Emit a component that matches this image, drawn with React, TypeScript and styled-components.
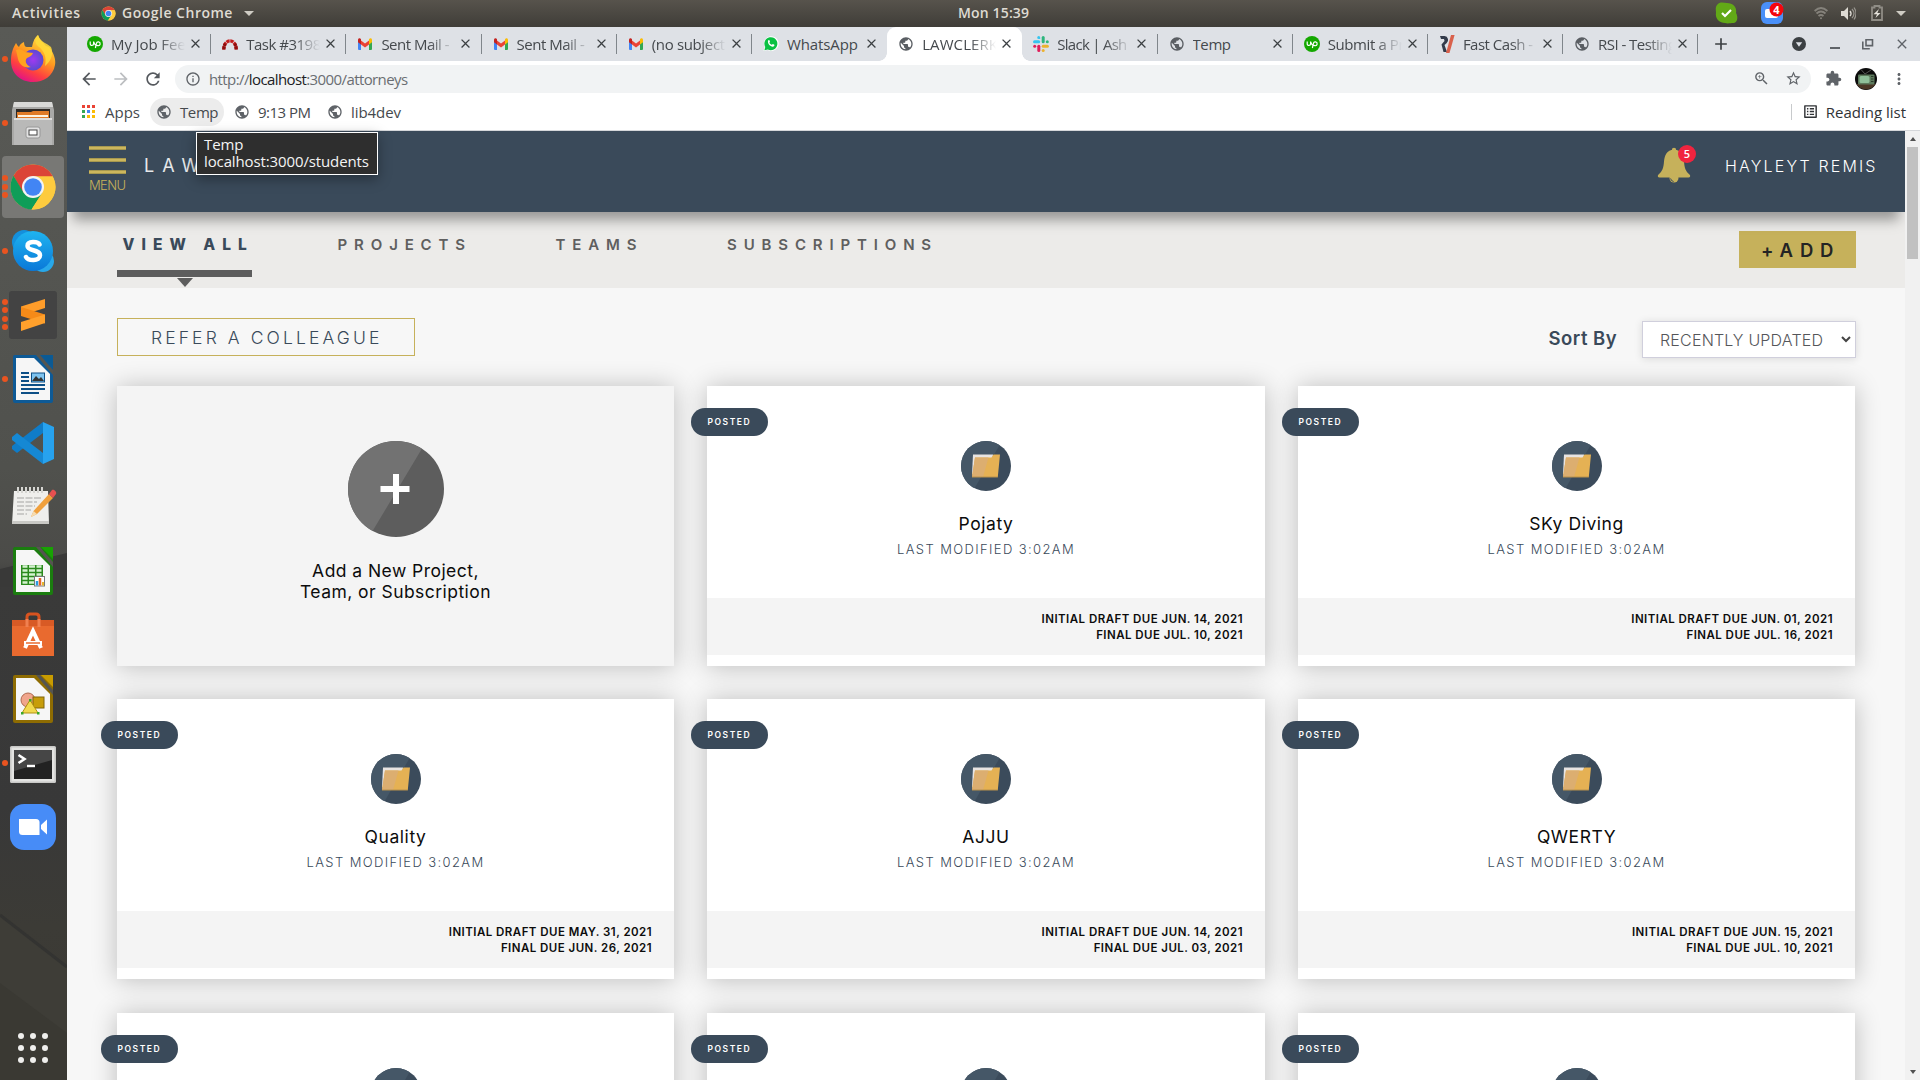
import React from 'react';
import styled, { createGlobalStyle, css } from 'styled-components';
import {
  MdAdd,
  MdArrowBack,
  MdArrowForward,
  MdClose,
  MdExtension,
  MdInfoOutline,
  MdListAlt,
  MdMoreVert,
  MdPublic,
  MdRefresh,
  MdStarBorder,
  MdZoomIn,
} from 'react-icons/md';

const ui = `"Open Sans", "Noto Sans", sans-serif`;
const brand = `Inter, "Open Sans", sans-serif`;
const navy = '#3a4a5a';
const gold = '#c6b15b';

const GlobalStyle = createGlobalStyle`
  *, *::before, *::after { box-sizing: border-box; }
  body { margin: 0; overflow: hidden; background: #f7f7f7; font-family: ${ui}; }
  svg { display: block; flex: none; }
  button { font: inherit; margin: 0; padding: 0; border: 0; background: none; color: inherit; }
`;

/* ---------- desktop shell ---------- */

const Desktop = styled.div`
  display: grid;
  grid-template-columns: 67px 1853px;
  grid-template-rows: 27px 1053px;
  width: 1920px;
  height: 1080px;
  overflow: hidden;
`;

const SystemBar = styled.header`
  grid-column: 1 / -1;
  display: grid;
  grid-template-columns: 958px auto 1fr;
  align-items: center;
  height: 27px;
  padding: 0 14px 1px 0;
  background: linear-gradient(#57534c, #3f3d38);
  color: #dfdbd2;
  font-size: 14px;
  font-weight: 600;
  line-height: 20px;
`;

const SystemLeft = styled.div`
  display: flex;
  align-items: center;
  padding-left: 12px;
`;

const Activities = styled.span`
  width: 89px;
  letter-spacing: 0.74px;
`;

const AppName = styled.span`
  margin: 0 11px 0 6px;
  letter-spacing: 0.5px;
`;

const Clock = styled.span`
  letter-spacing: 0.15px;
  white-space: nowrap;
`;

const SystemRight = styled.div`
  display: flex;
  align-items: center;
  justify-content: flex-end;
`;

const Caret = styled.span`
  width: 0;
  height: 0;
  border: 5px solid transparent;
  border-bottom: 0;
  border-top-color: #cfccc4;
`;

const TrayItem = styled.span<{ $gap: number }>`
  display: flex;
  margin-right: ${(p) => p.$gap}px;
`;

/* ---------- dock ---------- */

const Dock = styled.nav`
  position: relative;
  display: flex;
  flex-direction: column;
  padding-top: 0;
  background: linear-gradient(#595a56, #50514d 440px, #4b4b48 535px, #3a3a39 560px, #383838 780px, #3c3b36 900px, #3a3833);
`;

const DockShade = styled.svg`
  position: absolute;
  inset: 0;
`;

const DockSlot = styled.div<{ $active?: boolean }>`
  position: relative;
  display: flex;
  align-items: center;
  height: 64px;
  padding: 0 0 1px 2px;
  &::before {
    content: '';
    position: absolute;
    left: 2px;
    top: 1px;
    width: 62px;
    height: 62px;
    border-radius: 4px;
    background: ${(p) => (p.$active ? '#787875' : 'transparent')};
  }
`;

const Pips = styled.div`
  position: relative;
  display: flex;
  flex-direction: column;
  gap: 2.5px;
  width: 7px;
`;

const Pip = styled.i`
  width: 6px;
  height: 6px;
  border-radius: 50%;
  background: #e95420;
`;

const DockIcon = styled.svg`
  position: relative;
`;

const AppGrid = styled.div`
  position: relative;
  display: grid;
  grid-template-columns: repeat(3, 6px);
  gap: 6px;
  margin: auto 0 17px 18px;
`;

const GridDot = styled.i`
  width: 6px;
  height: 6px;
  border-radius: 50%;
  background: #efefed;
`;

/* ---------- browser chrome ---------- */

const Browser = styled.main`
  display: flex;
  flex-direction: column;
  min-width: 0;
  background: #fff;
  position: relative;
`;

const TabStrip = styled.div`
  display: flex;
  align-items: stretch;
  height: 34px;
  flex: none;
  padding-left: 9px;
  background: #dee1e6;
`;

const Tab = styled.div<{ $active?: boolean; $divider?: boolean }>`
  position: relative;
  display: flex;
  align-items: center;
  flex: none;
  width: 135.2px;
  padding: 0 0 1px 11px;
  border-radius: 9px 9px 0 0;
  ${(p) =>
    p.$active &&
    css`
      background: #fff;
      &::before,
      &::after {
        content: '';
        position: absolute;
        bottom: 0;
        width: 8px;
        height: 8px;
      }
      &::before {
        left: -8px;
        background: radial-gradient(circle at 0 0, transparent 7.5px, #fff 8px);
      }
      &::after {
        right: -8px;
        background: radial-gradient(circle at 100% 0, transparent 7.5px, #fff 8px);
      }
    `}
  ${(p) =>
    p.$divider &&
    css`
      &::after {
        content: '';
        position: absolute;
        right: 0;
        top: 7px;
        width: 1px;
        height: 20px;
        background: #80868b;
      }
    `}
`;

const TabTitle = styled.span<{ $spacing: number; $fade: boolean }>`
  width: 75px;
  margin-left: 8px;
  overflow: hidden;
  white-space: nowrap;
  color: #45494d;
  font-size: 15px;
  line-height: 22px;
  letter-spacing: ${(p) => p.$spacing}px;
  mask-image: ${(p) => (p.$fade ? 'linear-gradient(90deg, #000 48px, transparent 74px)' : 'none')};
`;

const TabClose = styled(MdClose)`
  margin-left: 2px;
  color: #3c4043;
`;

const StripButtons = styled.div`
  display: flex;
  align-items: center;
  flex: 1;
  padding: 0 10px 0 13px;
  color: #3c4043;
`;

const WindowButtons = styled.div`
  display: flex;
  align-items: center;
  gap: 20px;
  margin-left: auto;
`;

const Toolbar = styled.div`
  display: flex;
  align-items: center;
  height: 35px;
  flex: none;
  padding: 0 12px 0 12px;
  color: #5f6368;
`;

const NavButton = styled.button<{ $faded?: boolean }>`
  display: flex;
  width: 32px;
  color: ${(p) => (p.$faded ? '#bcbec1' : '#55595e')};
`;

const Omnibox = styled.div`
  display: flex;
  align-items: center;
  width: 1636px;
  height: 28px;
  padding: 0 9px 0 10px;
  border-radius: 14px;
  background: #f1f3f4;
`;

const Url = styled.span`
  margin: 0 auto 0 8px;
  font-size: 15px;
  line-height: 20px;
  letter-spacing: -0.6px;
  color: #6a6e72;
  b {
    font-weight: 400;
    color: #202124;
  }
`;

const OmniboxActions = styled.div`
  display: flex;
  gap: 15px;
`;

const ToolbarEnd = styled.div`
  display: flex;
  align-items: center;
  justify-content: space-between;
  flex: 1;
  padding-left: 14px;
`;

const Bookmarks = styled.div`
  display: flex;
  align-items: center;
  height: 35px;
  flex: none;
  padding: 0 14px 3px 15px;
  border-bottom: 1px solid #d5d7da;
  font-size: 15px;
  line-height: 20px;
  color: #45494d;
`;

const AppsMark = styled.div`
  display: grid;
  grid-template-columns: repeat(3, 3px);
  gap: 2px;
`;

const AppsCell = styled.i<{ $color: string }>`
  height: 3px;
  background: ${(p) => p.$color};
`;

const AppsLabel = styled.span`
  margin: 0 10px;
`;

const Bookmark = styled.div<{ $hover?: boolean; $width: number; $spacing: number }>`
  display: flex;
  align-items: center;
  gap: 8px;
  width: ${(p) => p.$width}px;
  height: 28px;
  margin-right: 4px;
  padding-left: 6px;
  border-radius: 14px;
  letter-spacing: ${(p) => p.$spacing}px;
  white-space: nowrap;
  background: ${(p) => (p.$hover ? '#ececec' : 'transparent')};
  svg {
    color: #5f6368;
  }
`;

const ReadingList = styled.div`
  display: flex;
  align-items: center;
  gap: 7px;
  height: 16px;
  margin-left: auto;
  padding-left: 10px;
  border-left: 1px solid #c8cacc;
  color: #303336;
`;

const Tooltip = styled.div`
  position: absolute;
  z-index: 5;
  left: 129px;
  top: 105px;
  width: 182px;
  height: 43px;
  padding: 3px 7px;
  border: 1px solid #fff;
  background: #2e2e2e;
  box-shadow: 0 4px 12px rgba(0, 0, 0, 0.35);
  color: #f4f4f4;
  font-size: 15px;
  line-height: 16.6px;
  letter-spacing: -0.12px;
  white-space: pre;
`;

/* ---------- page ---------- */

const Viewport = styled.div`
  display: grid;
  grid-template-columns: 1838px 15px;
  height: 949px;
  overflow: hidden;
`;

const Page = styled.div`
  display: flex;
  flex-direction: column;
  height: 949px;
  overflow: hidden;
  background: #f7f7f7;
  font-family: ${brand};
`;

const SiteHeader = styled.div`
  position: relative;
  z-index: 1;
  display: flex;
  align-items: flex-start;
  height: 81px;
  flex: none;
  padding: 15px 29px 0 22px;
  background: ${navy};
  box-shadow: 0 14px 12px -6px rgba(0, 0, 0, 0.36);
`;

const MenuButton = styled.button`
  display: flex;
  flex-direction: column;
  gap: 8px;
  width: 37px;
  color: ${gold};
  font-size: 13px;
  font-weight: 300;
  line-height: 16px;
  letter-spacing: -0.63px;
  text-align: left;
`;

const MenuBar = styled.i`
  height: 4px;
  background: linear-gradient(#a8994f 1px, #cdb75d 1px 3px, #a8994f 3px);
`;

const MenuLabel = styled.span`
  margin-top: -5px;
`;

const Wordmark = styled.span`
  margin: 8px 0 0 18px;
  color: #e6e8ea;
  font-size: 18px;
  font-weight: 400;
  line-height: 24px;
  letter-spacing: 8px;
`;

const Bell = styled.div`
  position: relative;
  margin: 1px 0 0 auto;
  width: 34px;
`;

const BellCount = styled.span`
  position: absolute;
  left: 21px;
  top: -2px;
  width: 18px;
  height: 18px;
  border-radius: 50%;
  background: #f0243f;
  color: #fff;
  font: 600 11px/18px ${ui};
  text-align: center;
`;

const UserName = styled.span`
  margin: 10px 0 0 34px;
  width: 151px;
  color: #fff;
  font-size: 16px;
  font-weight: 300;
  line-height: 20px;
  letter-spacing: 2.15px;
  white-space: nowrap;
`;

const SectionNav = styled.div`
  display: flex;
  align-items: flex-start;
  gap: 80px;
  height: 76px;
  flex: none;
  padding: 20px 49px 0 50px;
  background: #ecebe9;
`;

const SectionLink = styled.a<{ $current?: boolean; $width: number }>`
  display: flex;
  flex-direction: column;
  align-items: center;
  width: ${(p) => p.$width}px;
  color: ${(p) => (p.$current ? navy : '#5f5f5f')};
  font-size: ${(p) => (p.$current ? 15.5 : 15)}px;
  font-weight: ${(p) => (p.$current ? 800 : 600)};
  line-height: 25px;
  letter-spacing: ${(p) => (p.$current ? 7 : 6.85)}px;
`;

const LinkText = styled.span`
  align-self: flex-start;
  padding-left: 5.6px;
  white-space: nowrap;
`;

const Underline = styled.i`
  width: 100%;
  height: 7px;
  margin-top: 13px;
  background: #5d5d5d;
`;

const UnderlineTip = styled.i`
  margin-top: 1px;
  border: 8px solid transparent;
  border-top: 9px solid #5d5d5d;
  border-bottom: 0;
`;

const AddButton = styled.button`
  width: 117px;
  height: 37px;
  margin: -1px 0 0 auto;
  padding-left: 22px;
  background: ${gold};
  color: #242424;
  font-size: 18.5px;
  font-weight: 600;
  letter-spacing: 6.8px;
  text-align: left;
`;

const Controls = styled.div`
  display: flex;
  align-items: flex-start;
  height: 98px;
  flex: none;
  padding: 30px 49px 0 50px;
`;

const ReferButton = styled.button`
  width: 298px;
  height: 38px;
  padding-left: 33px;
  border: 1px solid ${gold};
  color: ${navy};
  font-size: 17.5px;
  font-weight: 300;
  letter-spacing: 3.1px;
  text-align: left;
`;

const SortLabel = styled.label`
  margin: 8px 25px 0 auto;
  color: ${navy};
  font-size: 18.5px;
  font-weight: 600;
  line-height: 24px;
  letter-spacing: 0.45px;
`;

const SortSelect = styled.div`
  display: flex;
  align-items: center;
  justify-content: space-between;
  width: 214px;
  height: 37px;
  margin-top: 3px;
  padding: 0 4px 0 17px;
  border: 1px solid #d0cfdc;
  background: #fff;
  box-shadow: 0 1px 8px rgba(0, 0, 0, 0.12);
  color: #55565a;
  font-size: 16px;
  font-weight: 300;
  letter-spacing: 0.2px;
`;

const CardGrid = styled.div`
  display: grid;
  grid-template-columns: 557px 558px 557px;
  grid-auto-rows: 280px;
  gap: 33.4px 33px;
  padding-left: 50px;
`;

const Card = styled.article<{ $muted?: boolean }>`
  position: relative;
  display: flex;
  flex-direction: column;
  align-items: center;
  padding-top: 55px;
  background: ${(p) => (p.$muted ? '#f4f4f4' : '#fff')};
  box-shadow: 0 1px 24px rgba(0, 0, 0, 0.24);
  color: #0c0c0c;
`;

const AddText = styled.p`
  margin: 23px 0 0;
  font-size: 17.5px;
  line-height: 21px;
  letter-spacing: 0.45px;
  text-align: center;
`;

const Badge = styled.span`
  position: absolute;
  left: -16.5px;
  top: 22px;
  width: 77px;
  height: 28px;
  padding-left: 17px;
  border-radius: 14px;
  background: ${navy};
  color: #fff;
  font-size: 8.5px;
  font-weight: 600;
  line-height: 29px;
  letter-spacing: 1.55px;
`;

const CardTitle = styled.h3`
  margin: 22px 0 0;
  font-size: 17.5px;
  font-weight: 400;
  line-height: 21px;
  letter-spacing: 0.55px;
`;

const Modified = styled.p`
  margin: 7px 0 0;
  color: ${navy};
  font-size: 13px;
  font-weight: 300;
  line-height: 17px;
  letter-spacing: 1.38px;
`;

const DueBand = styled.div`
  align-self: stretch;
  height: 57px;
  margin: auto 0 11px;
  padding: 13px 22px 0 0;
  background: #f4f4f4;
  font-size: 11.5px;
  font-weight: 600;
  line-height: 16px;
  letter-spacing: 0.46px;
  text-align: right;
`;

const Scrollbar = styled.div`
  display: flex;
  flex-direction: column;
  align-items: center;
  justify-content: space-between;
  padding: 6px 0;
  background: #f1f1f1;
`;

const ScrollArrow = styled.i<{ $down?: boolean }>`
  border: 3.5px solid transparent;
  ${(p) =>
    p.$down
      ? 'border-top: 4px solid #505050; border-bottom: 0;'
      : 'border-bottom: 4px solid #505050; border-top: 0;'}
`;

const ScrollThumb = styled.i`
  width: 11px;
  height: 112px;
  margin: 6px 0 auto;
  background: #c1c1c1;
`;

/* ---------- drawings ---------- */

const ChromeLogo = ({ size }: { size: number }) => (
  <svg width={size} height={size} viewBox="0 0 48 48">
    <circle cx="24" cy="24" r="22.5" fill="#fdcb3f" />
    <path d="M4.5 12.75A22.5 22.5 0 0 1 43.5 12.75V13.5H24L14 30Z" fill="#db4437" />
    <path d="M4.5 12.75A22.5 22.5 0 0 0 22.5 46.5L33.5 29.5L24 34L14.5 29.5Z" fill="#0f9d58" />
    <path d="M43.7 13.5A22.5 22.5 0 0 1 22.5 46.5L33.5 29.5L34 18L24 13.5Z" fill="#fdcb3f" />
    <circle cx="24" cy="24" r="11" fill="#f3f3f3" />
    <circle cx="24" cy="24" r="8.8" fill="#4285f4" />
  </svg>
);

const UpworkMark = () => (
  <svg width="16" height="16" viewBox="0 0 16 16">
    <circle cx="8" cy="8" r="8" fill="#14a800" />
    <path
      d="M3.2 5.6v2.2a1.7 1.7 0 0 0 3.4 0V5.6c.6 2 1.3 3.4 2.7 3.9M8.4 12l1-4.6A1.9 1.9 0 1 1 11 9.7c-1 0-1.8-.6-2.4-1.3"
      fill="none"
      stroke="#fff"
      strokeWidth="1.2"
    />
  </svg>
);

const RedmineMark = () => (
  <svg width="16" height="16" viewBox="0 0 16 16" fill="none" strokeWidth="3.2">
    <path d="M1.8 13.5C1.8 2 14.2 2 14.2 13.5" stroke="#c41c1c" strokeDasharray="3.4 .6" />
    <path d="M1.8 13.5c0-2.5.6-4.4 1.6-5.8M14.2 13.5c0-2.5-.6-4.4-1.6-5.8" stroke="#8e0f0f" strokeDasharray="3 .6" />
  </svg>
);

const GmailMark = () => (
  <svg width="16" height="16" viewBox="0 0 16 16">
    <path d="M1 4.5h3V14H2a1 1 0 0 1-1-1Z" fill="#4285f4" />
    <path d="M12 4.5h3V13a1 1 0 0 1-1 1h-2Z" fill="#34a853" />
    <path d="M4 4.4 8 7.4l4-3v4.2l-4 3-4-3Z" fill="#ea4335" />
    <path d="M1 4.2C1 2.2 3 1.8 4 3.2v5.4L1 6.2Z" fill="#c5221f" />
    <path d="M15 4.2c0-2-2-2.4-3-1v5.4l3-2.4Z" fill="#fbbc04" />
  </svg>
);

const WhatsAppMark = () => (
  <svg width="16" height="17" viewBox="0 0 17 17">
    <path d="M.6 16.6 1.8 12A7.800 7.800 0 1 1 5 15.4Z" fill="#fff" />
    <path d="m1.5 15.7.9-3.5a6.900 6.900 0 1 1 2.7 2.6Z" fill="#0ac143" />
    <path
      d="M5.4 5.4c.6-.9 1.3-.7 1.5-.2l.5 1.2c.1.5-.6.9-.6 1.2.6 1.2 1.5 1.9 2.6 2.3.4 0 .8-1 1.2-.8l1.4.7c.5.4-.1 1.8-1.3 2.1-2.7.4-6.3-3.3-5.3-6.5Z"
      fill="#fff"
    />
  </svg>
);

const SlackMark = () => (
  <svg width="16" height="16" viewBox="0 0 16 16">
    <g fill="#36c5f0">
      <rect x="0" y="4.3" width="7.2" height="3" rx="1.5" />
      <path d="M5.7 0a1.5 1.5 0 0 1 1.5 1.5V3H5.7a1.5 1.5 0 0 1 0-3Z" />
    </g>
    <g fill="#2eb67d">
      <rect x="8.7" y="0" width="3" height="7.2" rx="1.5" />
      <circle cx="14.3" cy="5.8" r="1.5" />
    </g>
    <g fill="#ecb22e">
      <rect x="8.7" y="8.7" width="7.2" height="3" rx="1.5" />
      <circle cx="10.2" cy="14.4" r="1.5" />
    </g>
    <g fill="#e01e5a">
      <rect x="4.3" y="8.7" width="3" height="7.2" rx="1.5" />
      <circle cx="1.7" cy="10.2" r="1.5" />
    </g>
  </svg>
);

const FastCashMark = () => (
  <svg width="16" height="18" viewBox="0 0 16 18">
    <path d="M1 1h4.500a4 4 0 0 1 2 7.200L5.500 10 8 17H4.500L2.500 9.500 5.500 6 5 4H2Z" fill="#333b4a" />
    <path d="M12 0h3.600L10.500 18H7Z" fill="#d9614c" />
  </svg>
);

const Globe = () => <MdPublic size={16} color="#5a5e63" />;

const BellDrawing = () => (
  <svg width="34" height="36" viewBox="0 0 34 36">
    <circle cx="17" cy="3" r="2.2" fill={gold} />
    <path
      d="M17 2.500C9.500 3 7.500 8.500 7 14.500 6.500 21 5.500 24 1.500 27.500.2 29 .8 30.500 2.500 30.500h29c1.700 0 2.300-1.500 1-3-4-3.500-5-6.500-5.500-13C26.500 8.500 24.500 3 17 2.500Z"
      fill={gold}
    />
    <circle cx="17" cy="31" r="4.5" fill={gold} />
    <path d="M13.600 31.500a3.600 3.600 0 0 0 3 3" stroke={navy} strokeWidth="1" fill="none" />
  </svg>
);

const PlusDrawing = () => (
  <svg width="96" height="96" viewBox="0 0 96 96">
    <defs>
      <clipPath id="plus-half">
        <path d="M0 0H78.500L21 96H0Z" />
      </clipPath>
    </defs>
    <circle cx="48" cy="48" r="48" fill="#5d5d5d" />
    <circle cx="48" cy="48" r="48" fill="#727272" clipPath="url(#plus-half)" />
    <path d="M45 33h6v12h10.500v6H51v12h-6V51H32.500v-6H45Z" fill="#fff" />
  </svg>
);

const FolderDrawing = () => (
  <svg width="50" height="50" viewBox="0 0 50 50">
    <defs>
      <clipPath id="folder-half">
        <path d="M0 0H41L12 50H0Z" />
      </clipPath>
    </defs>
    <circle cx="25" cy="25" r="25" fill="#3b4b5b" />
    <circle cx="25" cy="25" r="25" fill="#455767" clipPath="url(#folder-half)" />
    <path d="M12 13.500h20l-1.500 20H11Z" fill="#e8e4e2" />
    <path d="M14 16.500H30.500l2-3h6.500L36.800 36H11Z" fill="#e5b154" />
    <path d="M14 16.500H27.500L22 36H11Z" fill="#dcae70" />
    <path d="M11 35.400h25.900l-.1 1.200H11Z" fill="#b9924d" />
  </svg>
);

const documentBody = (outer: string, fold: string) => (
  <>
    <rect x="4" y="0" width="40" height="48" rx="2" fill={outer} />
    <path d="M7 3h18l16 16v26H7Z" fill="#f6f6f6" />
    <path d="M27 0h4l13 15v5Z" fill="#555550" />
    <path d="M32 0h12v12Z" fill={fold} />
  </>
);

const dockApps: { name: string; pips: number; active?: boolean; art: React.ReactNode }[] = [
  {
    name: 'firefox',
    pips: 1,
    art: (
      <>
        <defs>
          <linearGradient id="ff" x1=".8" y1="0" x2=".3" y2="1">
            <stop offset="0" stopColor="#fff04a" />
            <stop offset=".45" stopColor="#ff9a1f" />
            <stop offset=".75" stopColor="#ff4040" />
            <stop offset="1" stopColor="#e0108a" />
          </linearGradient>
          <radialGradient id="ffc">
            <stop offset="0" stopColor="#a03af0" />
            <stop offset="1" stopColor="#5a4ad0" />
          </radialGradient>
        </defs>
        <path
          d="M7 8c1 2 2 3 3 4 1-3 3-4 5-5 0 3 1 5 3 5h5C24 6 26 2 29 0c2 6 5 7 8 11l3 1c5 6 7 13 6 18C44 41 35 47 24 47 11 47 2 38 2 26 2 18 4 13 7 8Z"
          fill="url(#ff)"
        />
        <circle cx="24" cy="25" r="10.5" fill="url(#ffc)" />
        <path d="M7 15c4-2 7 0 9 2l8 1c-1 3-4 4-6 5-3 3 0 8 4 9-7 2-12-3-13-8Z" fill="#ffa21f" />
        <path d="M29 0c-4 5-3 9 1 12 5 4 8 10 6 19 6-5 9-12 6-19-4-4-10-4-13-12Z" fill="#ffd93a" opacity=".85" />
      </>
    ),
  },
  {
    name: 'files',
    pips: 1,
    art: (
      <>
        <path d="M5 3h38l2 8v35H3V11Z" fill="#a9a9a7" />
        <path d="M5 3h38l1 5H4Z" fill="#d9d9d7" />
        <path d="M7 10h34v9H7Z" fill="#2e2925" />
        <path d="M8 13h14l2-1h16v8H8Z" fill="#e07b27" />
        <path d="M9 16h30v2H9Z" fill="#fff3e0" />
        <path d="M5 19h38v27H5Z" fill="#b9b9b8" />
        <path d="M5 19h38v2H5Z" fill="#dededd" />
        <rect x="17" y="28" width="14" height="11" rx="2" fill="#e2e2e2" stroke="#989898" />
        <rect x="20" y="31" width="8" height="5" fill="#fff" stroke="#444" />
      </>
    ),
  },
  { name: 'chrome', pips: 3, active: true, art: <ChromeLogo size={48} /> },
  {
    name: 'skype',
    pips: 1,
    art: (
      <>
        <defs>
          <linearGradient id="sk" x1="0" y1="0" x2="0" y2="1">
            <stop offset="0" stopColor="#1fb4f0" />
            <stop offset="1" stopColor="#0a78d8" />
          </linearGradient>
        </defs>
        <circle cx="15" cy="15" r="12" fill="#1490dc" />
        <circle cx="34" cy="34" r="11" fill="#28a8ea" />
        <circle cx="24" cy="24" r="20" fill="url(#sk)" />
        <path
          d="M30.500 17.500c-1.500-3-12-4-12 1.500 0 5.500 12.500 3 12.500 9.500 0 6-12 5.500-14 1.500"
          fill="none"
          stroke="#fff"
          strokeWidth="4.5"
          strokeLinecap="round"
        />
      </>
    ),
  },
  {
    name: 'sublime',
    pips: 4,
    art: (
      <>
        <rect x="0" y="0" width="48" height="48" rx="3" fill="#434343" />
        <path d="M12 15.500 36 8v9L12 24.500Z" fill="#ff9d2a" />
        <path d="M12 16v9l24 7.500v-9Z" fill="#f58a18" />
        <path d="M12 31 36 23.500v8.500L12 40Z" fill="#ffa02c" />
      </>
    ),
  },
  {
    name: 'writer',
    pips: 1,
    art: (
      <>
        {documentBody('#0e5a96', '#0b5a94')}
        <path d="M12 18h8M12 22h8M12 26h8M12 30h24M12 34h24M12 38h18" stroke="#0d4f86" strokeWidth="2" />
        <rect x="22.5" y="18" width="13" height="9" fill="#7ec3ef" stroke="#0d4f86" />
        <path d="m23 26 4-5 3 3 2-2 3 4Z" fill="#333" />
      </>
    ),
  },
  {
    name: 'vscode',
    pips: 0,
    art: (
      <>
        <path d="M34 3v11L8 34l-5-4v-3Z" fill="#0f7cc8" />
        <path d="M34 45V34L8 14l-5 4v3Z" fill="#1588d4" />
        <path d="M34 3l11 5v32l-11 5Z" fill="#27a2ee" />
      </>
    ),
  },
  {
    name: 'notes',
    pips: 0,
    art: (
      <>
        <path d="M5 8h34l1 33H3Z" fill="#efefec" />
        <path d="M3 38h37v3H3Z" fill="#c9c9c5" />
        <path d="M9 4v6M13 4v6M17 4v6M21 4v6M25 4v6M29 4v6M33 4v6" stroke="#d6d6d2" strokeWidth="2" />
        <path d="M8 15h25M8 19h20M8 23h18M8 27h14M8 31h10" stroke="#a5a5a3" strokeDasharray="7 1.5" />
        <path d="m22 34 2.500-6L40 11l4 4-16 16Z" fill="#f0a03c" />
        <path d="m22 34 2.500-6 3.500 3Z" fill="#f6dcb0" />
        <path d="m40 11 3-4c2-1 5 2 4 4l-3 4Z" fill="#e85050" />
      </>
    ),
  },
  {
    name: 'calc',
    pips: 0,
    art: (
      <>
        {documentBody('#1b7d0f', '#18a303')}
        <rect x="12" y="18" width="22" height="20" fill="#2b8a1d" />
        <path
          d="M13.500 19.500h5M20 19.500h6M27.500 19.500h5M13.500 23.500h5M20 23.500h6M27.500 23.500h5M13.500 27.500h5M20 27.500h6M27.500 27.500h5M13.500 31.500h5M20 31.500h6M13.500 35.500h5M20 35.500h6"
          stroke="#d5f2cf"
          strokeWidth="2.5"
        />
        <rect x="25.5" y="29.5" width="10" height="9.5" fill="#fff" stroke="#777" />
        <path d="M28 34v4.500" stroke="#2c9be0" strokeWidth="2.5" />
        <path d="M31 31v7.500" stroke="#e2632a" strokeWidth="2.5" />
        <path d="M34 35v3.500" stroke="#e8b52c" strokeWidth="2" />
      </>
    ),
  },
  {
    name: 'software',
    pips: 0,
    art: (
      <>
        <path d="M18 14V6q0-3 3-3h6q3 0 3 3v8" fill="none" stroke="#d8531f" strokeWidth="3" />
        <path d="M3 9h42v36H3Z" fill="#e96a2f" />
        <path d="M3 9h42v6H3Z" fill="#d85a25" />
        <path d="M18 8v8M30 8v8" stroke="#f08050" strokeWidth="3" />
        <path d="m16 37 8-17 8 17" fill="none" stroke="#fff" strokeWidth="4" />
        <path d="M15 32h18" stroke="#fff" strokeWidth="4" />
        <path d="M17 32h14" stroke="#e96a2f" strokeWidth="1.5" />
      </>
    ),
  },
  {
    name: 'draw',
    pips: 0,
    art: (
      <>
        {documentBody('#8e6c02', '#c99c00')}
        <circle cx="19" cy="25" r="7" fill="#f0a58c" stroke="#b06a50" />
        <rect x="24" y="22" width="11" height="11" fill="#c79d0a" stroke="#80640a" />
        <path d="M13 38 21 25l8 13Z" fill="#f2d94e" stroke="#b09010" />
        <path d="M12 37h2.500v2.500H12ZM20 24h2.500v2.500H20ZM28 37h2.500v2.500H28Z" fill="#3aa827" />
      </>
    ),
  },
  {
    name: 'terminal',
    pips: 1,
    art: (
      <>
        <rect x="1" y="7" width="46" height="37" rx="1.5" fill="#c9c9c7" />
        <rect x="2.5" y="8.5" width="43" height="34" fill="#e4e4e2" />
        <rect x="5" y="11" width="38" height="29" fill="#222" />
        <path d="M5 11h38v10L5 32Z" fill="#464646" />
        <path d="m9.500 16 6 4-6 4" fill="none" stroke="#fff" strokeWidth="2.6" />
        <path d="M18 27h8" stroke="#fff" strokeWidth="2.4" />
      </>
    ),
  },
  {
    name: 'zoom',
    pips: 0,
    art: (
      <>
        <rect x="1" y="1" width="46" height="46" rx="14" fill="#478cf7" />
        <path d="M10 16h17q3.500 0 3.500 3.500V32h-17Q10 32 10 28.500Z" fill="#fff" />
        <path d="m32 22 6-5.500V31.500L32 26Z" fill="#fff" />
      </>
    ),
  },
];

/* ---------- data ---------- */

const tabs = [
  { title: 'My Job Feed', icon: <UpworkMark />, spacing: -0.1 },
  { title: 'Task #3198', icon: <RedmineMark />, spacing: -0.5 },
  { title: 'Sent Mail -', icon: <GmailMark />, spacing: -0.5 },
  { title: 'Sent Mail -', icon: <GmailMark />, spacing: -0.5 },
  { title: '(no subject', icon: <GmailMark />, spacing: -0.35 },
  { title: 'WhatsApp', icon: <WhatsAppMark />, spacing: -0.1, short: true },
  { title: 'LAWCLERK', icon: <Globe />, spacing: 0.1 },
  { title: 'Slack | Ash', icon: <SlackMark />, spacing: -0.73 },
  { title: 'Temp', icon: <Globe />, spacing: -0.4, short: true },
  { title: 'Submit a Pr', icon: <UpworkMark />, spacing: -0.4 },
  { title: 'Fast Cash -', icon: <FastCashMark />, spacing: -0.5 },
  { title: 'RSI - Testing', icon: <Globe />, spacing: -0.55 },
];
const activeTab = 6;

const projects = [
  { title: 'Pojaty', draft: 'JUN. 14, 2021', final: 'JUL. 10, 2021' },
  { title: 'SKy Diving', draft: 'JUN. 01, 2021', final: 'JUL. 16, 2021' },
  { title: 'Quality', draft: 'MAY. 31, 2021', final: 'JUN. 26, 2021' },
  { title: 'AJJU', draft: 'JUN. 14, 2021', final: 'JUL. 03, 2021' },
  { title: 'QWERTY', draft: 'JUN. 15, 2021', final: 'JUL. 10, 2021' },
  { title: '', draft: '', final: '' },
  { title: '', draft: '', final: '' },
  { title: '', draft: '', final: '' },
];

const appColors = ['#ea4335', '#ea4335', '#ea4335', '#34a853', '#4285f4', '#fbbc04', '#34a853', '#fbbc04', '#fbbc04'];

/* ---------- composition ---------- */

const TopBar = () => (
  <SystemBar>
    <SystemLeft>
      <Activities>Activities</Activities>
      <ChromeLogo size={15} />
      <AppName>Google Chrome</AppName>
      <Caret />
    </SystemLeft>
    <Clock>Mon 15:39</Clock>
    <SystemRight>
      <TrayItem $gap={23}>
        <svg width="23" height="22" viewBox="0 0 23 22">
          <path d="M2 3c3-4 7-2 10-2 7 0 10 5 9 10 2 3 2 9-2 10-4 0-6 1-9 0C4 21 0 16 1 11 1 8 0 6 2 3Z" fill="#62a917" />
          <path d="m7 11 3 3 6-6" fill="none" stroke="#fff" strokeWidth="2.2" />
        </svg>
      </TrayItem>
      <TrayItem $gap={30}>
        <svg width="23" height="22" viewBox="0 0 23 22">
          <rect width="22" height="22" rx="6" fill="#4a90f8" />
          <rect x="4" y="7" width="13" height="9" rx="2" fill="#fff" />
          <circle cx="15.500" cy="7.500" r="7" fill="#f5060c" />
          <text x="15.500" y="11.500" fontSize="11" fontWeight="700" fill="#fff" textAnchor="middle" fontFamily="Open Sans">
            4
          </text>
        </svg>
      </TrayItem>
      <TrayItem $gap={13}>
        <svg width="14" height="14" viewBox="0 0 14 14" fill="none" stroke="#85827b" strokeWidth="1.8">
          <path d="M.6 5Q7-1 13.400 5M2.500 7.500Q7 3.500 11.500 7.500M4.500 10Q7 8 9.500 10" />
          <circle cx="7" cy="12.300" r="1" fill="#85827b" stroke="none" />
        </svg>
      </TrayItem>
      <TrayItem $gap={15}>
        <svg width="15" height="13" viewBox="0 0 15 13">
          <path d="M0 4h3l4-4v13L3 9H0Z" fill="#dedbd4" />
          <path d="M9 4q2 2.500 0 5" fill="none" stroke="#dedbd4" strokeWidth="1.4" />
          <path d="M11 2q4 4.500 0 9M13 .5q4 6 0 12" fill="none" stroke="#98958e" strokeWidth="1.2" />
        </svg>
      </TrayItem>
      <TrayItem $gap={13}>
        <svg width="12" height="16" viewBox="0 0 12 16">
          <path d="M3.500 1h5v1.500H11V15H1V2.500h2.500Z" fill="none" stroke="#8f8c85" strokeWidth="1.8" />
          <path d="M8 4 2.500 9.200H6L4.500 13 9.500 8H6.300Z" fill="#e5e2db" />
        </svg>
      </TrayItem>
      <Caret />
    </SystemRight>
  </SystemBar>
);

const Launcher = () => (
  <Dock>
    <DockShade width="67" height="1053">
      <path d="M0 542 67 526V560H0Z" fill="#393938" />
      <path d="M0 888 67 940V1053H0Z" fill="#3e3d37" />
      <path d="M0 888 67 940" stroke="#333331" strokeWidth="3" />
      <path d="M0 956 67 1006V1053H0Z" fill="#3a3933" />
    </DockShade>
    {dockApps.map((app) => (
      <DockSlot key={app.name} $active={app.active}>
        <Pips>
          {Array.from({ length: app.pips }, (_, i) => (
            <Pip key={i} />
          ))}
        </Pips>
        <DockIcon width="48" height="48" viewBox="0 0 48 48">
          {app.art}
        </DockIcon>
      </DockSlot>
    ))}
    <AppGrid>
      {Array.from({ length: 9 }, (_, i) => (
        <GridDot key={i} />
      ))}
    </AppGrid>
  </Dock>
);

const BrowserChrome = () => (
  <>
    <TabStrip>
      {tabs.map((tab, i) => (
        <Tab key={i} $active={i === activeTab} $divider={i !== activeTab && i !== activeTab - 1}>
          {tab.icon}
          <TabTitle $spacing={tab.spacing} $fade={!tab.short}>
            {tab.title}
          </TabTitle>
          <TabClose size={15} />
        </Tab>
      ))}
      <StripButtons>
        <MdAdd size={20} />
        <WindowButtons>
          <svg width="14" height="14" viewBox="0 0 14 14">
            <circle cx="7" cy="7" r="7" fill="#3c4043" />
            <path d="M3.800 5.200h6.400L7 9.800Z" fill="#dee1e6" />
          </svg>
          <svg width="16" height="12" viewBox="0 0 16 12">
            <path d="M4 9h10v2H4Z" fill="#5f6368" />
          </svg>
          <svg width="12" height="11" viewBox="0 0 12 11" fill="none" stroke="#5f6368" strokeWidth="1.6">
            <path d="M4 .8h6.500v5.800H4ZM.8 2.500v7.300h7" />
          </svg>
          <MdClose size={16} color="#5f6368" />
        </WindowButtons>
      </StripButtons>
    </TabStrip>
    <Toolbar>
      <NavButton>
        <MdArrowBack size={20} />
      </NavButton>
      <NavButton $faded>
        <MdArrowForward size={20} />
      </NavButton>
      <NavButton>
        <MdRefresh size={20} />
      </NavButton>
      <Omnibox>
        <MdInfoOutline size={16} />
        <Url>
          http://<b>localhost</b>:3000/attorneys
        </Url>
        <OmniboxActions>
          <MdZoomIn size={17} />
          <MdStarBorder size={17} />
        </OmniboxActions>
      </Omnibox>
      <ToolbarEnd>
        <MdExtension size={17} />
        <svg width="22" height="22" viewBox="0 0 22 22">
          <circle cx="11" cy="11" r="11" fill="#0b0b0b" />
          <path d="M1.500 16h19a11 11 0 0 1-19 0Z" fill="#4b3726" />
          <path d="M6 1.500 10 6l6-4" stroke="#555" fill="none" />
          <rect x="3" y="6.5" width="16.500" height="10" rx="1" fill="#5d7a5c" />
          <rect x="4.5" y="8" width="10" height="7" rx="1.5" fill="#8fc09a" />
          <path d="M16 8.500h2.500M16 11h2.500M16 13.500h2.500" stroke="#2c3a2c" />
        </svg>
        <MdMoreVert size={18} />
      </ToolbarEnd>
    </Toolbar>
    <Bookmarks>
      <AppsMark>
        {appColors.map((color, i) => (
          <AppsCell key={i} $color={color} />
        ))}
      </AppsMark>
      <AppsLabel>Apps</AppsLabel>
      <Bookmark $hover $width={74} $spacing={-0.4}>
        <MdPublic size={16} />
        Temp
      </Bookmark>
      <Bookmark $width={89} $spacing={-0.5}>
        <MdPublic size={16} />
        9:13 PM
      </Bookmark>
      <Bookmark $width={80} $spacing={-0.07}>
        <MdPublic size={16} />
        lib4dev
      </Bookmark>
      <ReadingList>
        <MdListAlt size={17} />
        Reading list
      </ReadingList>
    </Bookmarks>
    <Tooltip>{'Temp\nlocalhost:3000/students'}</Tooltip>
  </>
);

export default function App() {
  return (
    <Desktop>
      <GlobalStyle />
      <TopBar />
      <Launcher />
      <Browser>
        <BrowserChrome />
        <Viewport>
          <Page>
            <SiteHeader>
              <MenuButton>
                <MenuBar />
                <MenuBar />
                <MenuBar />
                <MenuLabel>MENU</MenuLabel>
              </MenuButton>
              <Wordmark>LAWCLERK</Wordmark>
              <Bell>
                <BellDrawing />
                <BellCount>5</BellCount>
              </Bell>
              <UserName>HAYLEYT REMIS</UserName>
            </SiteHeader>
            <SectionNav>
              <SectionLink $current $width={135}>
                <LinkText>VIEW ALL</LinkText>
                <Underline />
                <UnderlineTip />
              </SectionLink>
              <SectionLink $width={138}>
                <LinkText>PROJECTS</LinkText>
              </SectionLink>
              <SectionLink $width={91.5}>
                <LinkText>TEAMS</LinkText>
              </SectionLink>
              <SectionLink $width={220}>
                <LinkText>SUBSCRIPTIONS</LinkText>
              </SectionLink>
              <AddButton>+ADD</AddButton>
            </SectionNav>
            <Controls>
              <ReferButton>REFER A COLLEAGUE</ReferButton>
              <SortLabel>Sort By</SortLabel>
              <SortSelect>
                RECENTLY UPDATED
                <svg width="10" height="7" viewBox="0 0 10 7" fill="none" stroke="#444" strokeWidth="2">
                  <path d="m1 1 4 4 4-4" />
                </svg>
              </SortSelect>
            </Controls>
            <CardGrid>
              <Card $muted>
                <PlusDrawing />
                <AddText>
                  Add a New Project,
                  <br />
                  Team, or Subscription
                </AddText>
              </Card>
              {projects.map((project, i) => (
                <Card key={i}>
                  <Badge>POSTED</Badge>
                  <FolderDrawing />
                  {project.title && (
                    <>
                      <CardTitle>{project.title}</CardTitle>
                      <Modified>LAST MODIFIED 3:02AM</Modified>
                      <DueBand>
                        INITIAL DRAFT DUE {project.draft}
                        <br />
                        FINAL DUE {project.final}
                      </DueBand>
                    </>
                  )}
                </Card>
              ))}
            </CardGrid>
          </Page>
          <Scrollbar>
            <ScrollArrow />
            <ScrollThumb />
            <ScrollArrow $down />
          </Scrollbar>
        </Viewport>
      </Browser>
    </Desktop>
  );
}
